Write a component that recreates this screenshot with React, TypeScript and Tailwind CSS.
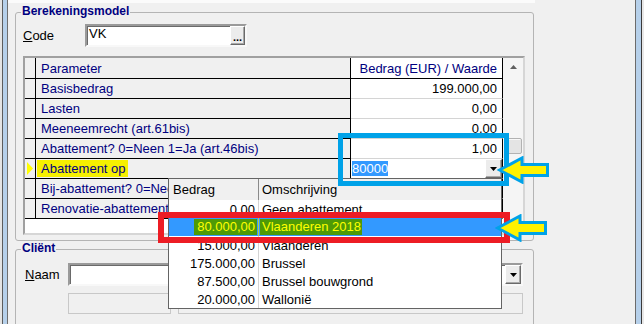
import React from "react";

const sunken =
  "border-2 border-t-[#9a9a9a] border-l-[#9a9a9a] border-r-[#f8f8f8] border-b-[#f8f8f8] shadow-[inset_1px_1px_0_#6a6a6a]";
const raised =
  "border border-t-white border-l-white border-r-[#6a6a6a] border-b-[#6a6a6a] bg-[#ececec] shadow-[inset_-1px_-1px_0_#a8a8a8]";

function DownTri() {
  return (
    <svg width="7" height="4" viewBox="0 0 7 4">
      <polygon points="0,0 7,0 3.5,4" fill="#000" />
    </svg>
  );
}

function Arrow({ className }: { className: string }) {
  return (
    <svg className={className} width="53" height="28" viewBox="0 0 53 28">
      <polygon
        points="2.5,14 25,2 25,8.5 50.5,8.5 50.5,19.5 25,19.5 25,26"
        fill="#fff200"
        stroke="#00a2e8"
        strokeWidth="3"
      />
    </svg>
  );
}

type Row = { p: string; v: string; current?: boolean };

const rows: Row[] = [
  { p: "Basisbedrag", v: "199.000,00" },
  { p: "Lasten", v: "0,00" },
  { p: "Meeneemrecht (art.61bis)", v: "0,00" },
  { p: "Abattement? 0=Neen 1=Ja (art.46bis)", v: "1,00" },
  { p: "Abattement op", v: "", current: true },
  { p: "Bij-abattement? 0=Neen 1=Ja", v: "0,00" },
  { p: "Renovatie-abattement? 0=Neen 1=Ja", v: "0,00" },
];

const options: { b: string; o: string; sel?: boolean }[] = [
  { b: "0,00", o: "Geen abattement" },
  { b: "80.000,00", o: "Vlaanderen 2018", sel: true },
  { b: "15.000,00", o: "Vlaanderen" },
  { b: "175.000,00", o: "Brussel" },
  { b: "87.500,00", o: "Brussel bouwgrond" },
  { b: "20.000,00", o: "Wallonië" },
];

export default function App() {
  return (
    <div className="relative flex h-[324px] w-[644px] overflow-hidden bg-[#f0f0f0] font-['Liberation_Sans',Arial,sans-serif] text-[13px] leading-none text-black">
      {/* left window frame */}
      <div className="flex shrink-0">
        <div className="w-[2px] bg-[#e4e4e4]" />
        <div className="w-px bg-[#5c5c5c]" />
        <div className="w-[4px] bg-[#b6d0ea]" />
        <div className="w-px bg-[#6e6e6e]" />
      </div>

      {/* main */}
      <div className="flex w-[627px] shrink-0 flex-col">
        <div className="h-[3px] w-[527px] shrink-0 bg-[#fbfbfb]" />

        {/* Berekeningsmodel */}
        <div className="ml-[7px] mt-[9px] flex h-[229px] w-[519px] shrink-0 flex-col rounded-[3px] border border-[#b4b4b4]">
          <div className="-mt-[9px] ml-[5px] w-fit bg-[#f0f0f0] px-px text-[12px] font-bold leading-[14px] text-[#000080]">
            Berekeningsmodel
          </div>

          <div className="mt-[6px] flex h-[23px] items-center">
            <span className="ml-[7px] w-[62px]">
              <span className="underline">C</span>ode
            </span>
            <div className={`flex h-[23px] w-[162px] bg-white ${sunken}`}>
              <span className="pl-[2px] leading-[15px]">VK</span>
              <div className={`ml-auto flex h-[19px] w-[15px] items-end justify-center pb-[3px] ${raised}`}>
                <span className="text-[11px] font-bold leading-[8px]">...</span>
              </div>
            </div>
          </div>

          {/* grid */}
          <div className="ml-[7px] mt-[9px] flex h-[179px] w-[502px] border-2 border-t-[#a0a0a0] border-l-[#a0a0a0] border-r-[#d6d6d6] border-b-[#d6d6d6] shadow-[inset_1px_1px_0_#7a7a7a]">
            <div className="flex w-[478px] flex-col">
              {/* header */}
              <div className="flex h-[21px] shrink-0">
                <div className="w-[11px] border-r border-b border-black bg-[#f0f0f0]" />
                <div className="flex w-[315px] items-center border-r border-b border-black bg-[#f0f0f0] pl-[5px] text-[#000080]">
                  Parameter
                </div>
                <div className="flex w-[152px] items-center justify-end border-r border-b border-black bg-white pr-[5px] text-[#000080]">
                  Bedrag (EUR) / Waarde
                </div>
              </div>
              {rows.map((r) => (
                <div key={r.p} className="flex h-[20px] shrink-0">
                  <div className="flex w-[11px] border-r border-b border-black bg-[#f0f0f0]">
                    {r.current && (
                      <svg width="10" height="19" viewBox="0 0 10 19">
                        <polygon points="2,3 8,9.5 2,16" fill="#ffff00" />
                      </svg>
                    )}
                  </div>
                  <div className="flex w-[315px] items-center overflow-hidden whitespace-nowrap border-r border-b border-black bg-[#f0f0f0] text-[#000080]">
                    {r.current ? (
                      <span className="ml-px bg-[#f6f000] pl-[4px] pr-[2px] leading-[17px]">{r.p}</span>
                    ) : (
                      <span className="pl-[5px]">{r.p}</span>
                    )}
                  </div>
                  {r.current ? (
                    <div className="flex w-[152px] items-center border-r border-b border-r-black border-b-[#c8c8c8] bg-white">
                      <span className="ml-px h-[15px] bg-[#3399ff] leading-[15px] text-white">80000</span>
                      <div className={`ml-auto flex h-[19px] w-[17px] items-center justify-center ${raised}`}>
                        <DownTri />
                      </div>
                    </div>
                  ) : (
                    <div className="flex w-[152px] items-center justify-end border-r border-b border-r-black border-b-[#d4d4d4] bg-white pr-[5px]">
                      {r.v}
                    </div>
                  )}
                </div>
              ))}
              <div className="flex-1 bg-white" />
            </div>
            {/* scrollbar */}
            <div className="flex w-[20px] flex-col bg-[#f5f5f5]">
              <div className="flex h-[17px] items-center justify-center">
                <svg width="7" height="4" viewBox="0 0 7 4">
                  <polygon points="0,4 7,4 3.5,0" fill="#606060" />
                </svg>
              </div>
              <div className="ml-[3px] mt-[63px] h-[16px] w-[16px] rounded-[2px] border border-[#b2b2b2] bg-[#e4e4e4] shadow-[inset_1px_1px_0_#f8f8f8]" />
            </div>
          </div>
        </div>

        {/* Cliënt */}
        <div className="ml-[7px] mt-[8px] flex h-[100px] w-[519px] shrink-0 flex-col rounded-[3px] border border-[#b4b4b4]">
          <div className="-mt-[9px] ml-[5px] w-fit bg-[#f0f0f0] px-px text-[12px] font-bold leading-[14px] text-[#000080]">
            Cliënt
          </div>
          <div className="mt-[8px] flex h-[23px] items-center">
            <span className="ml-[9px] w-[43px]">
              <span className="underline">N</span>aam
            </span>
            <div className={`flex h-[23px] w-[455px] bg-white ${sunken}`}>
              <div className={`ml-auto flex h-[19px] w-[16px] items-center justify-center ${raised}`}>
                <DownTri />
              </div>
            </div>
          </div>
          <div className="mt-[7px] flex">
            <div className="ml-[52px] h-[21px] w-[103px] border border-[#c8c8c8]" />
            <div className="ml-[7px] h-[21px] w-[345px] border border-[#c8c8c8]" />
          </div>
        </div>
      </div>

      {/* right window frame */}
      <div className="flex shrink-0">
        <div className="w-px bg-[#6b6b6b]" />
        <div className="w-[5px] bg-[#b6d0ea]" />
        <div className="w-px bg-[#3a3a3a]" />
        <div className="w-[2px] bg-[#e8e8e8]" />
      </div>

      {/* dropdown list */}
      <div className="absolute left-[168px] top-[178px] z-10 flex h-[131px] w-[334px] flex-col border border-[#646464] bg-white">
        <div className="flex h-[21px] shrink-0 bg-[#f0f0f0]">
          <div className="flex w-[90px] items-center border-r border-[#8a8a8a] pl-[4px]">Bedrag</div>
          <div className="flex flex-1 items-center pl-[3px]">Omschrijving</div>
        </div>
        {options.map((o) => (
          <div key={o.b} className={`flex h-[18px] shrink-0 ${o.sel ? "bg-[#3399ff]" : ""}`}>
            {o.sel ? (
              <>
                <div className="flex w-[90px] items-center justify-end border-r border-[#b8d040] pr-px">
                  <span className="h-[16px] bg-[#4e9a06] pl-[3px] pr-[2px] leading-[16px] text-[#ffff00]">{o.b}</span>
                </div>
                <div className="flex flex-1 items-center">
                  <span className="ml-px h-[16px] bg-[#4e9a06] pl-[2px] pr-px leading-[16px] text-[#ffff00]">{o.o}</span>
                </div>
              </>
            ) : (
              <>
                <div className="flex w-[90px] items-center justify-end border-r border-[#d4d4d4] pr-[3px]">{o.b}</div>
                <div className="flex flex-1 items-center pl-[3px]">{o.o}</div>
              </>
            )}
          </div>
        ))}
      </div>

      {/* annotations */}
      <div className="absolute left-[338px] top-[133px] z-20 h-[53px] w-[171px] border-[5px] border-[#00a2e8]" />
      <div className="absolute left-[158px] top-[212px] z-20 h-[31px] w-[352px] border-[6px] border-[#ed1c24]" />
      <Arrow className="absolute left-[497px] top-[156px] z-30" />
      <Arrow className="absolute left-[495px] top-[214px] z-30" />
    </div>
  );
}
